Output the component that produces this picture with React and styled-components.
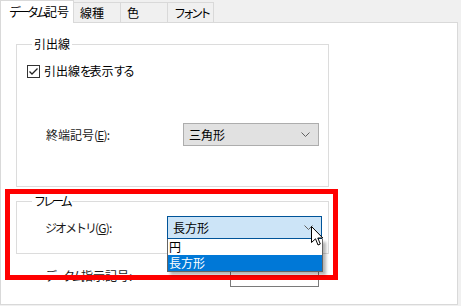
import React from "react";
import styled, { createGlobalStyle } from "styled-components";

const GlobalStyle = createGlobalStyle`
  * {
    margin: 0;
    padding: 0;
    box-sizing: border-box;
  }
  body {
    background: #f0f0f0;
    font-family: "Noto Sans CJK JP", "Noto Sans", sans-serif;
    font-size: 12px;
    line-height: 16px;
    color: #000;
  }
`;

const Page = styled.div`
  width: 461px;
  height: 306px;
  display: flex;
  flex-direction: column;
  background: #f0f0f0;
  overflow: hidden;
`;

const TabBar = styled.div`
  display: flex;
  align-items: flex-end;
  height: 23px;
  position: relative;
  z-index: 2;
  margin-bottom: -1px;
`;

const Tab = styled.div`
  width: ${(p) => p.$w}px;
  height: ${(p) => (p.$active ? 23 : 21)}px;
  padding-left: ${(p) => (p.$active ? 8 : 6)}px;
  padding-top: ${(p) => (p.$active ? 3 : 2)}px;
  background: ${(p) => (p.$active ? "#fff" : "#f0f0f0")};
  border: 1px solid #d9d9d9;
  border-bottom: ${(p) => (p.$active ? "none" : "1px solid #d9d9d9")};
  margin-left: ${(p) => (p.$first ? 0 : -1)}px;
  white-space: nowrap;
`;

const Kana = styled.span`
  letter-spacing: ${(p) => p.$ls ?? -3}px;
`;

const Panel = styled.div`
  position: relative;
  width: 458px;
  height: 283px;
  background: #fff;
  border: 1px solid #d9d9d9;
  padding: 13px 0 0 15px;
`;

const Group = styled.fieldset`
  width: 313px;
  border: 1px solid #dcdcdc;
  padding: 0 0 ${(p) => p.$pb}px 10px;
  margin-top: ${(p) => p.$mt}px;
`;

const Legend = styled.legend`
  margin-left: 5px;
  padding: 0 2px;
  line-height: 16px;
`;

const CheckRow = styled.label`
  display: flex;
  align-items: center;
  gap: 4px;
  margin-top: 11px;
  height: 16px;
`;

const CheckBox = styled.span`
  width: 13px;
  height: 13px;
  border: 1px solid #333;
  background: #fff;
  display: flex;
  align-items: center;
  justify-content: center;
`;

const Row = styled.div`
  display: flex;
  align-items: center;
  margin-top: ${(p) => p.$mt}px;
  padding-left: ${(p) => p.$pl}px;
  height: 23px;
`;

const Label = styled.span`
  width: ${(p) => p.$w}px;
  white-space: nowrap;
  color: #1a1a1a;
`;

const Punct = styled.span`
  letter-spacing: -0.8px;
`;

const ComboWrap = styled.div`
  position: relative;
  width: ${(p) => p.$w}px;
  height: 23px;
`;

const Combo = styled.div`
  height: 23px;
  display: flex;
  align-items: center;
  justify-content: space-between;
  padding: 0 8px 0 5px;
  background: ${(p) => (p.$open ? "#cce4f7" : p.$plain ? "#fff" : "#e1e1e1")};
  border: 1px solid ${(p) => (p.$open ? "#005499" : p.$plain ? "#7a7a7a" : "#adadad")};
`;

const DropList = styled.div`
  position: absolute;
  top: 23px;
  left: 0;
  width: 156px;
  background: #fff;
  border: 1px solid #646464;
  border-top: none;
  box-shadow: 3px 3px 3px rgba(0, 0, 0, 0.3);
  z-index: 3;
`;

const Item = styled.div`
  height: 16px;
  line-height: 16px;
  padding-left: 1px;
  background: ${(p) => (p.$sel ? "#0078d7" : "#fff")};
  color: ${(p) => (p.$sel ? "#fff" : "#000")};
`;

const Highlight = styled.div`
  position: absolute;
  left: 4px;
  top: 166px;
  width: 333px;
  height: 91px;
  border: 5px solid #ff0000;
  z-index: 2;
  pointer-events: none;
`;

const Cursor = styled.svg`
  position: absolute;
  left: 310px;
  top: 203px;
  z-index: 5;
`;

const Chevron = () => (
  <svg width="9" height="6" viewBox="0 0 9 6">
    <path d="M0.5 0.5 L4.5 4.5 L8.5 0.5" fill="none" stroke="#606060" strokeWidth="1" />
  </svg>
);

export default function App() {
  return (
    <>
      <GlobalStyle />
      <Page>
        <TabBar>
          <Tab $w={74} $active $first><Kana>データム</Kana>記号</Tab>
          <Tab $w={48}>線種</Tab>
          <Tab $w={48}>色</Tab>
          <Tab $w={47}><Kana $ls={-3.5}>フォント</Kana></Tab>
        </TabBar>
        <Panel>
          <Group $mt={0} $pb={40}>
            <Legend>引出線</Legend>
            <CheckRow>
              <CheckBox>
                <svg width="11" height="11" viewBox="0 0 11 11">
                  <path d="M1.5 5.5 L4 8 L9.5 2.5" fill="none" stroke="#222" strokeWidth="1.3" />
                </svg>
              </CheckBox>
              <span>
                引出線<Kana $ls={-2.5}>を</Kana>表示<Kana $ls={-2.5}>する</Kana>
              </span>
            </CheckRow>
            <Row $mt={44} $pl={19}>
              <Label $w={137}>
                終端記号<Punct>(<u>E</u>):</Punct>
              </Label>
              <ComboWrap $w={136}>
                <Combo>
                  三角形
                  <Chevron />
                </Combo>
              </ComboWrap>
            </Row>
          </Group>
          <Group $mt={6} $pb={14}>
            <Legend><Kana>フレーム</Kana></Legend>
            <Row $mt={7} $pl={18}>
              <Label $w={122}>
                <Kana $ls={-2}>ジオメトリ</Kana>
                <Punct>(<u>G</u>):</Punct>
              </Label>
              <ComboWrap $w={155}>
                <Combo $open>
                  長方形
                  <Chevron />
                </Combo>
                <DropList>
                  <Item>円</Item>
                  <Item $sel>長方形</Item>
                </DropList>
              </ComboWrap>
            </Row>
          </Group>
          <Row $mt={10} $pl={29}>
            <Label $w={185}>
              <Kana>データム</Kana>指示記号:
            </Label>
            <ComboWrap $w={89}>
              <Combo $plain />
            </ComboWrap>
          </Row>
          <Highlight />
          <Cursor width="13" height="21" viewBox="0 0 13 21">
            <path
              d="M0.5 0.5 L0.5 16.5 L4.5 12.8 L7 19 L9.3 18 L6.8 12 L11.8 12 Z"
              fill="#fff"
              stroke="#000"
              strokeWidth="1"
            />
          </Cursor>
        </Panel>
      </Page>
    </>
  );
}
